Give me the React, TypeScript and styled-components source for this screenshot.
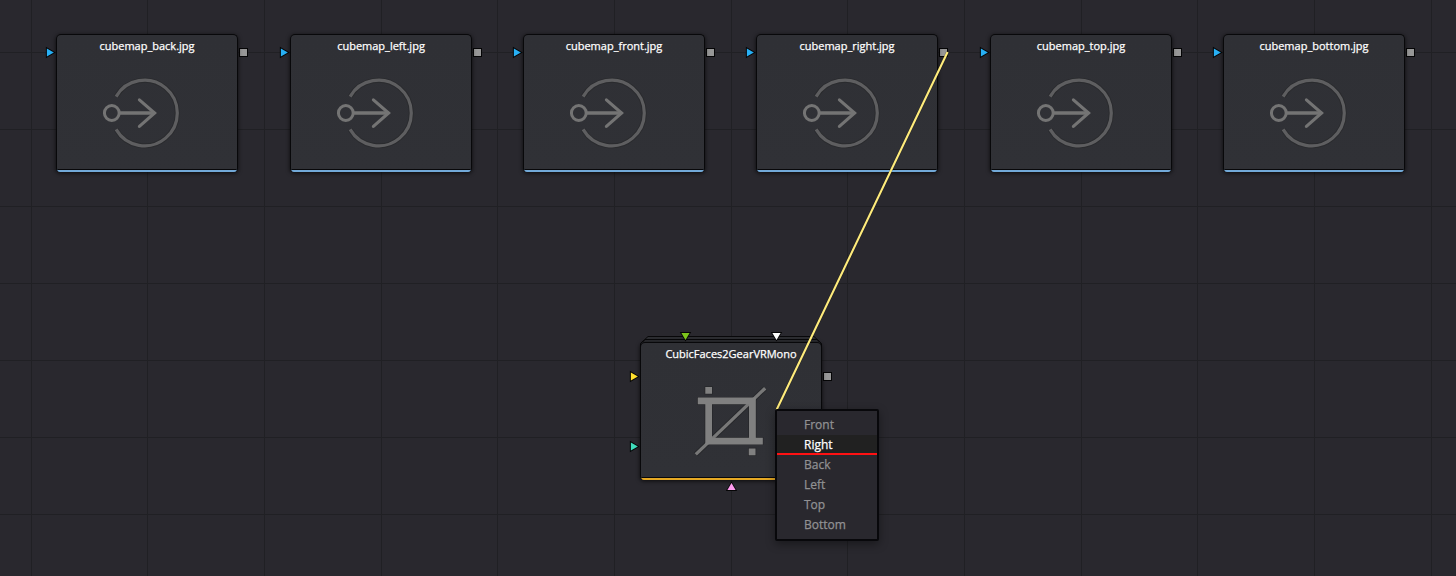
import React from "react";
import styled, { createGlobalStyle } from "styled-components";

const GlobalStyle = createGlobalStyle`
  body { margin: 0; background: #29282e; }
  *, *::after { box-sizing: border-box; }
`;

const gridLine = "#202024";

const Canvas = styled.main`
  position: relative;
  width: 1456px;
  height: 576px;
  overflow: hidden;
  font-family: "Open Sans", "Noto Sans", sans-serif;
  background-color: #29282e;
  background-image:
    linear-gradient(90deg, ${gridLine} 1px, transparent 1px),
    linear-gradient(90deg, ${gridLine} 1px, transparent 1px),
    linear-gradient(90deg, ${gridLine} 1px, transparent 1px),
    linear-gradient(${gridLine} 1px, transparent 1px);
  background-size: 350px 100%, 350px 100%, 350px 100%, 100% 77px;
  background-position: 31px 0, 147px 0, 264px 0, 0 52px;
`;

/* A node is a card framed by four gutters that hold its ports. */
const NodeFrame = styled.section<{ $x: number; $y: number }>`
  position: absolute;
  left: ${(p) => p.$x - 11}px;
  top: ${(p) => p.$y - 11}px;
  display: grid;
  grid-template-columns: 11px 182px 11px;
  grid-template-rows: 11px 138px 12px;
  grid-template-areas:
    ". top ."
    "left card right"
    ". bottom .";
`;

const SidePorts = styled.div<{ $side: "left" | "right"; $inset: number }>`
  grid-area: ${(p) => p.$side};
  display: flex;
  flex-direction: column;
  align-items: ${(p) => (p.$side === "left" ? "flex-start" : "center")};
  gap: 59px;
  padding-top: ${(p) => p.$inset}px;
`;

const EdgePorts = styled.div<{ $edge: "top" | "bottom" }>`
  grid-area: ${(p) => p.$edge};
  z-index: 1;
  display: flex;
  justify-content: center;
  align-items: flex-end;
  gap: 80px;
`;

const NodeCard = styled.div<{ $accent: string }>`
  grid-area: card;
  z-index: 1;
  display: flex;
  flex-direction: column;
  border: 1px solid #08080a;
  border-bottom: 0;
  border-radius: 5px 5px 4px 4px;
  background: linear-gradient(#2f3035, #303136);
  box-shadow: 0 1px 4px rgba(0, 0, 0, 0.75);
  overflow: hidden;

  &::after {
    content: "";
    height: 3px;
    border-top: 1px solid #08080a;
    background: ${(p) => p.$accent};
  }
`;

const NodeTitle = styled.h2`
  margin: 0;
  padding-top: 3px;
  color: #fff;
  font-size: 11px;
  font-weight: 500;
  line-height: 16px;
  text-align: center;
  white-space: nowrap;
  -webkit-text-stroke: 0.25px currentColor;
`;

const NodeArt = styled.svg`
  display: block;
  width: 180px;
  height: 115px;
`;

const Stack = styled.svg`
  grid-column: 2;
  grid-row: 1 / 3;
  padding-top: 4px;
`;

const OutputPort = styled.i`
  width: 9px;
  height: 9px;
  border: 1px solid #050506;
  background: #979797;
`;

const PortMark = styled.svg<{ $turn: number }>`
  flex: none;
  overflow: visible;
  transform: rotate(${(p) => p.$turn}deg);
`;

const Cable = styled.svg`
  position: absolute;
  inset: 0;
  z-index: 2;
`;

const Menu = styled.ul`
  position: absolute;
  z-index: 3;
  left: 775px;
  top: 409px;
  width: 104px;
  margin: 0;
  padding: 4px 0;
  list-style: none;
  border: 2px solid #08080b;
  border-radius: 2px;
  background: #29282e;
  box-shadow: 0 3px 10px rgba(0, 0, 0, 0.4);
`;

const MenuItem = styled.li<{ $active: boolean }>`
  height: 20px;
  padding-left: 27px;
  font-size: 12px;
  font-weight: 500;
  line-height: 19px;
  -webkit-text-stroke: 0.25px currentColor;
  color: ${(p) => (p.$active ? "#fff" : "#919193")};
  background: ${(p) => (p.$active ? "#212121" : "transparent")};
  border-bottom: ${(p) => (p.$active ? "2px solid #ff1113" : "0")};
`;

function InputPort({ color, turn = 0 }: { color: string; turn?: number }) {
  return (
    <PortMark $turn={turn} width="11" height="11" viewBox="0 0 11 11">
      <path d="M0.9 -0.2 L10.6 5.5 L0.9 11.2 Z" fill="#050506" />
      <path d="M1.9 1.4 L8.9 5.5 L1.9 9.6 Z" fill={color} />
    </PortMark>
  );
}

function LoaderArt() {
  return (
    <NodeArt viewBox="57 54 180 115" fill="none" strokeLinecap="round">
      <path d="M116.1 96.6 A32.8 32.8 0 1 1 116.1 129.4" stroke="#2a2b2e" strokeWidth="5" strokeLinecap="butt" />
      <path d="M116.1 96.6 A32.8 32.8 0 1 1 116.1 129.4" stroke="#5e5e60" strokeWidth="3.2" strokeLinecap="butt" />
      <circle cx="111.8" cy="113" r="7.4" stroke="#747474" strokeWidth="3" />
      <path d="M120 113 H154" stroke="#747474" strokeWidth="3.3" />
      <path d="M139.4 99.8 L154.6 113 L139.4 126.4" stroke="#747474" strokeWidth="3.1" strokeLinejoin="miter" />
    </NodeArt>
  );
}

const cropShape =
  "M697.8 397.6 H755.8 V437.8 H762.8 V444.4 H705.3 V404.2 H697.8 Z M712 404.2 V437.8 H749 V404.2 Z M705.3 387 H712 V393.7 H705.3 Z M748.8 448.5 H755.5 V455.2 H748.8 Z";

function CropArt() {
  return (
    <NodeArt viewBox="641 362 180 115">
      <path d="M695.8 454.4 L765.2 388.2" stroke="#26272a" strokeWidth="5" />
      <path d={cropShape} fill="#808080" fillRule="evenodd" stroke="#26272a" strokeWidth="1.4" />
      <path d="M695.8 454.4 L765.2 388.2" stroke="#787878" strokeWidth="3.3" />
      <path d={cropShape} fill="#808080" fillRule="evenodd" />
    </NodeArt>
  );
}

const loaders = [
  { x: 56, name: "cubemap_back.jpg" },
  { x: 290, name: "cubemap_left.jpg" },
  { x: 523, name: "cubemap_front.jpg" },
  { x: 756, name: "cubemap_right.jpg" },
  { x: 990, name: "cubemap_top.jpg" },
  { x: 1223, name: "cubemap_bottom.jpg" },
];

const faces = ["Front", "Right", "Back", "Left", "Top", "Bottom"];

export default function App() {
  return (
    <>
      <GlobalStyle />
      <Canvas>
        {loaders.map((n) => (
          <NodeFrame key={n.name} $x={n.x} $y={34}>
            <SidePorts $side="left" $inset={13}>
              <InputPort color="#28b0f5" />
            </SidePorts>
            <NodeCard $accent="#72a9d8">
              <NodeTitle>{n.name}</NodeTitle>
              <LoaderArt />
            </NodeCard>
            <SidePorts $side="right" $inset={14}>
              <OutputPort />
            </SidePorts>
          </NodeFrame>
        ))}
        <NodeFrame $x={640} $y={342}>
          <Stack width="182" height="18" viewBox="0 0 182 14">
            <path d="M0.5 8.5 L8 1.5 H174 L181.5 8.5 V14 H0.5 Z" fill="#2c2d31" stroke="#08080a" />
            <path d="M2.5 7 L5 4.5 H177 L179.5 7" fill="none" stroke="#08080a" />
          </Stack>
          <EdgePorts $edge="top">
            <InputPort color="#7dc51c" turn={90} />
            <InputPort color="#ffffff" turn={90} />
          </EdgePorts>
          <SidePorts $side="left" $inset={29}>
            <InputPort color="#ffe02e" />
            <InputPort color="#40dcbc" />
          </SidePorts>
          <NodeCard $accent="#e5a823">
            <NodeTitle>CubicFaces2GearVRMono</NodeTitle>
            <CropArt />
          </NodeCard>
          <SidePorts $side="right" $inset={30}>
            <OutputPort />
          </SidePorts>
          <EdgePorts $edge="bottom">
            <InputPort color="#ff9cf0" turn={-90} />
          </EdgePorts>
        </NodeFrame>
        <Cable width="1456" height="576" viewBox="0 0 1456 576">
          <path d="M947.6 52 L776.5 410" stroke="#0000004d" strokeWidth="3" />
          <path d="M947.6 52 L776.5 410" stroke="#ffec7c" strokeWidth="2.1" />
        </Cable>
        <Menu>
          {faces.map((face) => (
            <MenuItem key={face} $active={face === "Right"}>
              {face}
            </MenuItem>
          ))}
        </Menu>
      </Canvas>
    </>
  );
}
